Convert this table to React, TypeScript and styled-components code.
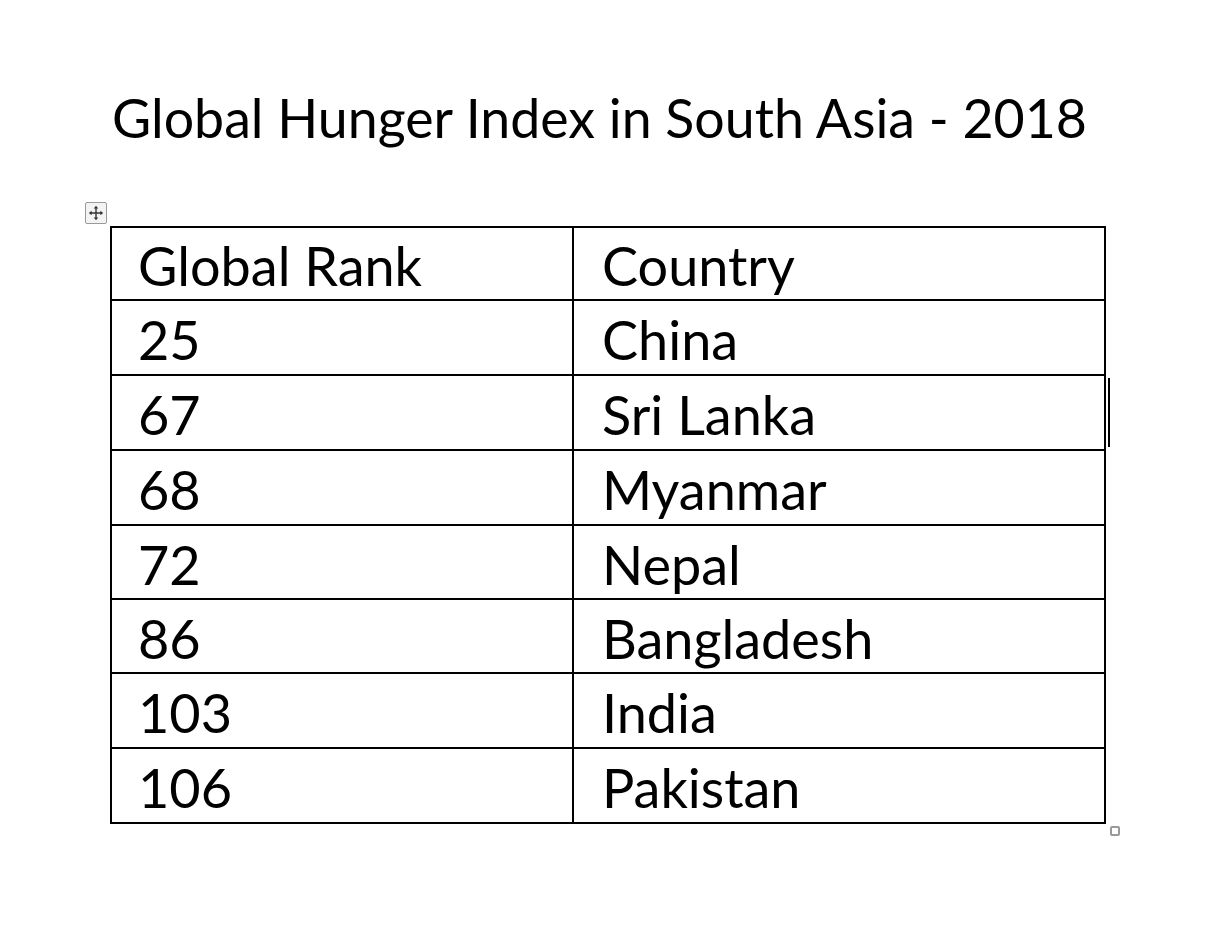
import React from "react";
import styled, { createGlobalStyle } from "styled-components";

const GlobalStyle = createGlobalStyle`
  html, body { margin: 0; padding: 0; background: #ffffff; }
  body { font-family: Lato, "Open Sans", sans-serif; color: #000; }
`;

const Page = styled.div`
  width: 1226px;
  height: 952px;
  background: #fff;
  box-sizing: border-box;
  padding-top: 90px;
  padding-left: 110px;
  display: flex;
  flex-direction: column;
`;

const Title = styled.h1`
  margin: 0;
  padding-left: 2px;
  font-family: Lato, sans-serif;
  font-weight: 400;
  font-size: 53.7px;
  line-height: 54px;
  color: #000;
  white-space: nowrap;
`;

const TableWrap = styled.div`
  position: relative;
  margin-top: 82px;
  width: 996px;
`;

const Table = styled.table`
  border-collapse: separate;
  border-spacing: 0;
  width: 996px;
  table-layout: fixed;
  border-left: 2px solid #000;
  border-top: 2px solid #000;
`;

const Row = styled.tr<{ $h: number }>`
  height: ${(p) => p.$h}px;
`;

const Cell = styled.td<{ $w: number; $pad: number }>`
  width: ${(p) => p.$w}px;
  box-sizing: border-box;
  border-right: 2px solid #000;
  border-bottom: 2px solid #000;
  padding: 5px 0 0 ${(p) => p.$pad}px;
  font-family: Lato, sans-serif;
  font-size: 54px;
  line-height: 54px;
  vertical-align: middle;
  white-space: nowrap;
`;

const MoveHandle = styled.div`
  position: absolute;
  left: -25px;
  top: -24px;
  width: 22px;
  height: 22px;
  box-sizing: border-box;
  border: 1px solid #9a9a9a;
  border-radius: 2px;
  background: #f3f3f3;
  display: flex;
  align-items: center;
  justify-content: center;
`;

const ResizeHandle = styled.div`
  position: absolute;
  left: 1000px;
  top: 600px;
  width: 10px;
  height: 10px;
  box-sizing: border-box;
  border: 2px solid #999;
  border-radius: 2px;
  background: #fff;
`;

const EdgeMark = styled.div`
  position: absolute;
  left: 998px;
  top: 152px;
  width: 2px;
  height: 69px;
  background: #000;
`;

const rows: [string, string][] = [
  ["Global Rank", "Country"],
  ["25", "China"],
  ["67", "Sri Lanka"],
  ["68", "Myanmar"],
  ["72", "Nepal"],
  ["86", "Bangladesh"],
  ["103", "India"],
  ["106", "Pakistan"],
];

const heights = [73, 75, 75, 75, 74, 74, 75, 75];

const MoveIcon = () => (
  <svg width="16" height="16" viewBox="0 0 16 16">
    <path d="M8 2.5 V13.5 M2.5 8 H13.5" stroke="#333" strokeWidth="1.4" />
    <path d="M8 0.8 L10.3 3.6 H5.7 Z" fill="#333" />
    <path d="M8 15.2 L10.3 12.4 H5.7 Z" fill="#333" />
    <path d="M0.8 8 L3.6 5.7 V10.3 Z" fill="#333" />
    <path d="M15.2 8 L12.4 5.7 V10.3 Z" fill="#333" />
  </svg>
);

export default function App() {
  return (
    <>
      <GlobalStyle />
      <Page>
        <Title>Global Hunger Index in South Asia - 2018</Title>
        <TableWrap>
          <MoveHandle>
            <MoveIcon />
          </MoveHandle>
          <Table>
            <tbody>
              {rows.map(([rank, country], i) => (
                <Row key={i} $h={heights[i]}>
                  <Cell $w={462} $pad={26}>{rank}</Cell>
                  <Cell $w={532} $pad={28}>{country}</Cell>
                </Row>
              ))}
            </tbody>
          </Table>
          <EdgeMark />
          <ResizeHandle />
        </TableWrap>
      </Page>
    </>
  );
}
